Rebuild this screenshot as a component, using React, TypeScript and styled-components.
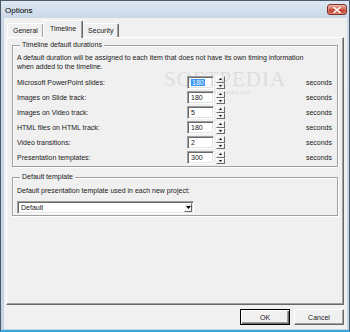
import styled, { createGlobalStyle } from "styled-components";

const GlobalStyle = createGlobalStyle`
  html, body {
    margin: 0;
    padding: 0;
    background: #1d4f73;
  }
  body {
    font-family: "Liberation Sans", Arial, sans-serif;
    color: #1a1a1a;
  }
  * {
    box-sizing: border-box;
  }
`;

const durations = [
  { label: "Microsoft PowerPoint slides:", value: "180", selected: true },
  { label: "Images on Slide track:", value: "180" },
  { label: "Images on Video track:", value: "5" },
  { label: "HTML files on HTML track:", value: "180" },
  { label: "Video transitions:", value: "2" },
  { label: "Presentation templates:", value: "300" },
];

function Arrow({ down }: { down?: boolean }) {
  return (
    <svg width="3" height="2" viewBox="0 0 3 2">
      <path d={down ? "M0 0H3L1.5 2Z" : "M1.5 0L3 2H0Z"} fill="#000" />
    </svg>
  );
}

function Spinner({ value, selected }: { value: string; selected?: boolean }) {
  return (
    <SpinWrap>
      <NumBox>{selected ? <Selected>{value}</Selected> : value}</NumBox>
      <SpinButtons>
        <SpinHalf>
          <Arrow />
        </SpinHalf>
        <SpinHalf>
          <Arrow down />
        </SpinHalf>
      </SpinButtons>
    </SpinWrap>
  );
}

export default function App() {
  return (
    <>
      <GlobalStyle />
      <Window>
        <TitleBar>
          <Title>Options</Title>
          <CloseButton aria-label="Close">
            <svg width="8" height="6" viewBox="0 0 8 6">
              <path
                d="M1 0.5L7 5.5M7 0.5L1 5.5"
                stroke="#fff"
                strokeWidth="1.6"
                strokeLinecap="round"
              />
            </svg>
          </CloseButton>
        </TitleBar>

        <Client>
          <TabBar>
            <Tab>General</Tab>
            <Tab $active>Timeline</Tab>
            <Tab>Security</Tab>
          </TabBar>

          <Panel>
            <Group>
              <Legend>Timeline default durations</Legend>
              <Intro>
                A default duration will be assigned to each item that does not
                have its own timing information
                <br />
                when added to the timeline.
              </Intro>
              <Rows>
                {durations.map((d) => (
                  <Row key={d.label}>
                    <Label>{d.label}</Label>
                    <Spinner value={d.value} selected={d.selected} />
                    <Unit>seconds</Unit>
                  </Row>
                ))}
              </Rows>
            </Group>

            <Group $second>
              <Legend>Default template</Legend>
              <Label>Default presentation template used in each new project:</Label>
              <Combo>
                <ComboText>Default</ComboText>
                <ComboButton>
                  <svg width="5" height="3" viewBox="0 0 5 3">
                    <path d="M0 0H5L2.5 3Z" fill="#000" />
                  </svg>
                </ComboButton>
              </Combo>
            </Group>

            <Watermark aria-hidden>
              SOFTPEDIA
              <small>www.softpedia.com</small>
            </Watermark>
          </Panel>

          <Footer>
            <Button $default>OK</Button>
            <Button>Cancel</Button>
          </Footer>
        </Client>
      </Window>
    </>
  );
}

const Window = styled.div`
  width: 350px;
  height: 332px;
  display: flex;
  flex-direction: column;
  padding: 0 2px 1px 3px;
  border: 1px solid #4b5a69;
  border-bottom: 2px solid #38a8db;
  background: linear-gradient(180deg, #dce7f2 0, #cad8e7 17px, #c4d3e3 100%);
`;

const TitleBar = styled.div`
  height: 17px;
  display: flex;
  align-items: flex-start;
  justify-content: space-between;
  padding-left: 1px;
`;

const Title = styled.div`
  margin-top: 5px;
  font-size: 8px;
  line-height: 9px;
  color: #000;
`;

const CloseButton = styled.div`
  margin-top: 3px;
  width: 20px;
  height: 11px;
  display: grid;
  place-items: center;
  border: 1px solid #7b2f26;
  border-radius: 3px;
  background: linear-gradient(180deg, #e9a99b 0%, #d4705f 45%, #c2402f 55%, #cf6a4f 100%);
  box-shadow: inset 0 0 0 1px rgba(255, 255, 255, 0.25);
`;

const Client = styled.div`
  flex: 1;
  display: flex;
  flex-direction: column;
  padding: 2px 3px 4px 2px;
  background: #f0f0f0;
`;

const TabBar = styled.div`
  height: 17px;
  display: flex;
  align-items: flex-end;
  padding-left: 1px;
  position: relative;
  z-index: 1;
`;

const Tab = styled.div<{ $active?: boolean }>`
  height: ${({ $active }) => ($active ? "18px" : "14px")};
  margin: ${({ $active }) => ($active ? "0 -1px -1px" : "0")};
  padding: ${({ $active }) => ($active ? "3px 6px 0" : "2px 5px 0")};
  font-size: 7px;
  line-height: 9px;
  background: #f0f0f0;
  border-top: 1px solid #fff;
  border-left: 1px solid #fff;
  border-right: 1px solid #696969;
  border-radius: 2px 2px 0 0;
  box-shadow: inset -1px 0 0 #a0a0a0;
  position: ${({ $active }) => ($active ? "relative" : "static")};
  z-index: ${({ $active }) => ($active ? 2 : 0)};
`;

const Panel = styled.div`
  flex: 1;
  position: relative;
  display: flex;
  flex-direction: column;
  padding: 3px 5px 0 5px;
  background: #f0f0f0;
  border: 1px solid;
  border-color: #fff #696969 #696969 #fff;
  box-shadow: inset -1px -1px 0 #a0a0a0;
`;

const Group = styled.fieldset<{ $second?: boolean }>`
  margin: ${({ $second }) => ($second ? "6px 0 0" : "0")};
  padding: ${({ $second }) => ($second ? "6px 5px 1px 4px" : "5px 5px 1px 4px")};
  min-inline-size: 0;
  border: 1px solid #a0a0a0;
  box-shadow: inset 1px 1px 0 #fff, 1px 1px 0 #fff;
`;

const Legend = styled.legend`
  margin-left: 3px;
  padding: 0 2px;
  font-size: 7px;
  line-height: 8px;
  background: #f0f0f0;
`;

const Intro = styled.p`
  margin: 0;
  font-size: 7px;
  line-height: 8.5px;
  white-space: nowrap;
`;

const Rows = styled.div`
  margin-top: 4px;
  display: flex;
  flex-direction: column;
`;

const Row = styled.div`
  height: 15px;
  display: grid;
  grid-template-columns: 170px 38px 1fr;
  align-items: center;
`;

const Label = styled.div`
  font-size: 7px;
  line-height: 8px;
  white-space: nowrap;
`;

const Unit = styled.div`
  justify-self: end;
  font-size: 7px;
  line-height: 8px;
`;

const SpinWrap = styled.div`
  display: flex;
  gap: 2px;
  height: 13px;
`;

const NumBox = styled.div`
  width: 28px;
  height: 13px;
  padding: 2px 0 0 3px;
  font-size: 7px;
  line-height: 8px;
  background: #fff;
  border: 1px solid;
  border-color: #a0a0a0 #fff #fff #a0a0a0;
  box-shadow: inset 1px 1px 0 #696969, inset -1px -1px 0 #e3e3e3;
`;

const Selected = styled.span`
  background: #3399ff;
  color: #fff;
  padding: 0 1px;
`;

const SpinButtons = styled.div`
  width: 9px;
  display: flex;
  flex-direction: column;
`;

const SpinHalf = styled.div`
  flex: 1;
  display: grid;
  place-items: center;
  background: #f0f0f0;
  border: 1px solid;
  border-color: #fff #696969 #696969 #fff;
`;

const Combo = styled.div`
  margin-top: 6px;
  width: 177px;
  height: 13px;
  display: flex;
  align-items: stretch;
  padding: 1px;
  background: #fff;
  border: 1px solid;
  border-color: #a0a0a0 #fff #fff #a0a0a0;
  box-shadow: inset 1px 1px 0 #696969, inset -1px -1px 0 #e3e3e3;
`;

const ComboText = styled.div`
  flex: 1;
  padding: 1px 0 0 2px;
  font-size: 7px;
  line-height: 8px;
`;

const ComboButton = styled.div`
  width: 8px;
  display: grid;
  place-items: center;
  background: #f0f0f0;
  border: 1px solid;
  border-color: #fff #696969 #696969 #fff;
`;

const Watermark = styled.div`
  position: absolute;
  left: 157px;
  top: 31px;
  display: flex;
  flex-direction: column;
  align-items: center;
  font-family: "Liberation Serif", "Times New Roman", serif;
  font-size: 21px;
  line-height: 20px;
  letter-spacing: 1px;
  color: rgba(150, 150, 150, 0.22);
  pointer-events: none;

  small {
    font-family: "Liberation Sans", Arial, sans-serif;
    font-size: 6px;
    line-height: 7px;
    letter-spacing: 0;
    color: rgba(150, 150, 150, 0.3);
  }
`;

const Footer = styled.div`
  margin-top: 4px;
  display: flex;
  justify-content: flex-end;
  gap: 4px;
`;

const Button = styled.div<{ $default?: boolean }>`
  width: 50px;
  height: 16px;
  display: grid;
  place-items: center;
  font-size: 7px;
  background: #f0f0f0;
  border: 1px solid ${({ $default }) => ($default ? "#000" : "#fff")};
  border-color: ${({ $default }) =>
    $default ? "#000" : "#fff #696969 #696969 #fff"};
  box-shadow: ${({ $default }) =>
    $default
      ? "inset 1px 1px 0 #fff, inset -1px -1px 0 #696969, inset -2px -2px 0 #a0a0a0"
      : "inset -1px -1px 0 #a0a0a0"};
`;
